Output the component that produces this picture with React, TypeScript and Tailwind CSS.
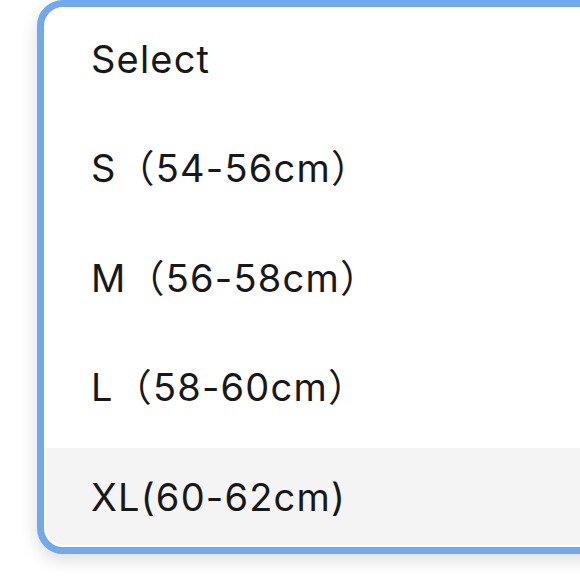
import React from "react";

const items = ["Select", "S（54-56cm）", "M（56-58cm）", "L（58-60cm）", "XL(60-62cm)"];

export default function App() {
  return (
    <div className="w-[580px] h-[580px] overflow-hidden bg-white relative">
      <div className="ml-[37px] w-[620px] border-[7px] border-[#72a9ee] rounded-[26px] bg-white pt-[3px] pb-[2px] px-[2px] shadow-[0_6px_18px_rgba(0,0,0,0.14)]">
        <div className="flex flex-col gap-[12.5px]">
          {items.map((t, i) => (
            <div
              key={t}
              className={`h-[97px] flex items-center pl-[45px] text-[38px] tracking-[1.2px] text-[#181818] leading-none ${i === 4 ? "bg-[#f4f4f4] rounded-bl-[18px]" : ""}`}
              style={{ fontFamily: "Inter, 'Noto Sans CJK SC', sans-serif" }}
            >
              {t}
            </div>
          ))}
        </div>
      </div>
    </div>
  );
}
